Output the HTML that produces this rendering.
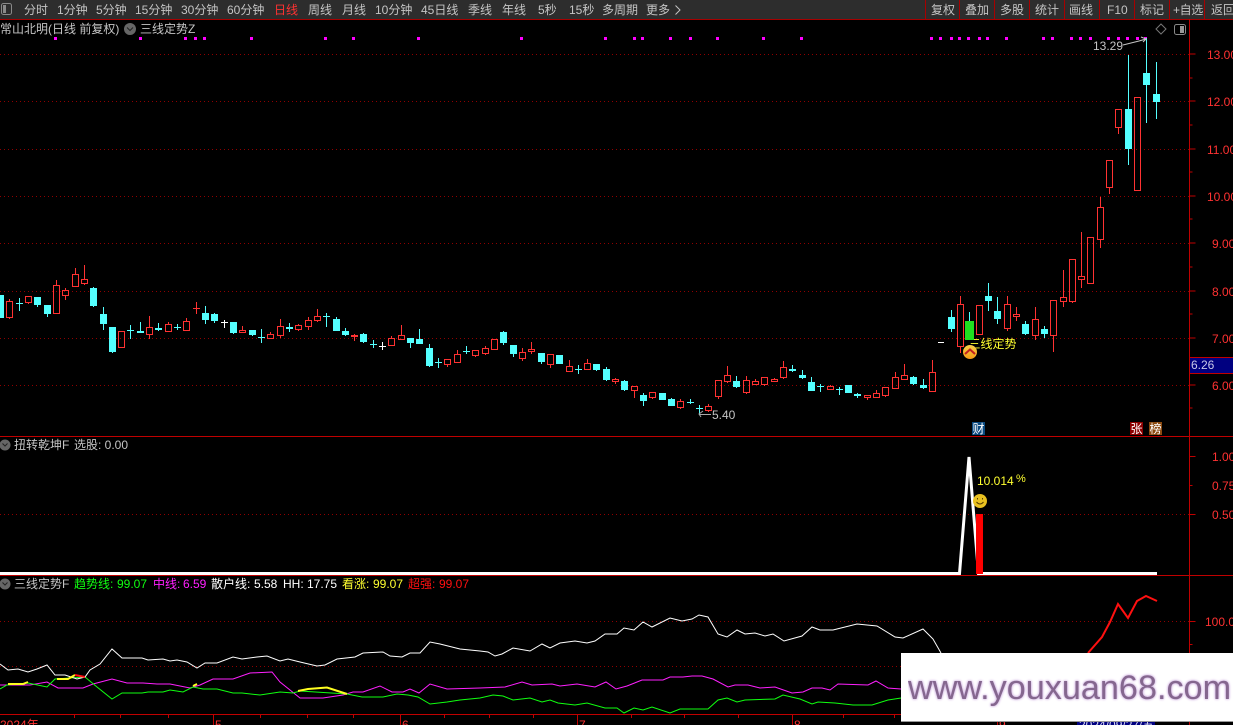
<!DOCTYPE html>
<html lang="zh"><head><meta charset="utf-8"><title>三线定势</title>
<style>
html,body{margin:0;padding:0;background:#000;width:1233px;height:725px;overflow:hidden}
svg{display:block;position:absolute;left:0;top:0}
text{font-family:"Liberation Sans","Noto Sans CJK SC",sans-serif;font-size:12px}
.t text{fill:#c4c4c4}
.a text{fill:#ff3232}
.c{shape-rendering:crispEdges}
.g{stroke:#900000;stroke-width:1;stroke-dasharray:1 3;fill:none}
#wm{position:absolute;left:908px;top:668px;font:34.2px/40px "Liberation Sans",sans-serif;color:#85678f;text-shadow:0 0 2px #c9a6dc,0 0 3px #dcc4ea;white-space:nowrap;width:325px;overflow:hidden}
</style></head><body>
<svg width="1233" height="725" viewBox="0 0 1233 725" xmlns="http://www.w3.org/2000/svg">
<defs><linearGradient id="og" x1="0" y1="0" x2="0" y2="1"><stop offset="0" stop-color="#f9d04a"/><stop offset="1" stop-color="#f59a14"/></linearGradient></defs>
<rect width="1233" height="725" fill="#000"/>
<!-- toolbar -->
<rect width="1233" height="19" fill="#2d2d2d"/>
<g class="c" fill="#a80000"><rect y="19" width="1233" height="1"/><rect x="925" width="1" height="19"/><rect x="959" width="1" height="19"/><rect x="994" width="1" height="19"/><rect x="1029" width="1" height="19"/><rect x="1064" width="1" height="19"/><rect x="1099" width="1" height="19"/><rect x="1134" width="1" height="19"/><rect x="1169" width="1" height="19"/><rect x="1204" width="1" height="19"/></g>
<rect x="1.500" y="3.500" width="10" height="11" rx="2" fill="none" stroke="#8a8a8a"/><rect x="3" y="5" width="3" height="8" fill="#8a8a8a"/>
<g class="t">
<text x="24" y="14">分时</text><text x="57" y="14">1分钟</text><text x="96" y="14">5分钟</text><text x="135" y="14">15分钟</text><text x="181" y="14">30分钟</text><text x="227" y="14">60分钟</text>
<text x="274" y="14" style="fill:#ff3232">日线</text><text x="308" y="14">周线</text><text x="342" y="14">月线</text><text x="375" y="14">10分钟</text><text x="421" y="14">45日线</text><text x="468" y="14">季线</text><text x="502" y="14">年线</text><text x="538" y="14">5秒</text><text x="569" y="14">15秒</text><text x="602" y="14">多周期</text><text x="646" y="14">更多</text>
<text x="931" y="14">复权</text><text x="965" y="14">叠加</text><text x="1000" y="14">多股</text><text x="1035" y="14">统计</text><text x="1069" y="14">画线</text><text x="1107" y="14">F10</text><text x="1140" y="14">标记</text><text x="1173" y="14" style="letter-spacing:-.4px">+自选</text><text x="1211" y="14">返回</text>
<text x="0" y="33">常山北明(日线 前复权)</text><text x="140" y="33">三线定势Z</text>
<text x="14" y="449">扭转乾坤F</text><text x="74" y="449">选股: 0.00</text>
<text x="14" y="588">三线定势F</text>
<text x="1093" y="50">13.29</text><text x="712" y="419">5.40</text>
</g>
<path d="M675.500 5.500l4.500 4.500-4.500 4.500" fill="none" stroke="#c4c4c4"/>
<circle cx="130" cy="29" r="6" fill="#666"/><path d="M127 27.500l3 3 3-3" stroke="#222" fill="none"/>
<path d="M1161 24l5 5-5 5-5-5z" fill="none" stroke="#777"/>
<rect x="1174.500" y="24.500" width="11" height="10" rx="2" fill="none" stroke="#888"/><rect x="1180" y="26" width="4" height="7" fill="#999"/>
<circle cx="5" cy="445" r="5.500" fill="#666"/><path d="M2.500 443.500l2.500 2.500 2.500-2.500" stroke="#222" fill="none"/>
<circle cx="5" cy="584" r="5.500" fill="#666"/><path d="M2.500 582.500l2.500 2.500 2.500-2.500" stroke="#222" fill="none"/>
<!-- dots -->
<path class="c" fill="#ff00ff" d="M54 37h3v3h-3zM139 37h3v3h-3zM184 37h3v3h-3zM194 37h3v3h-3zM203 37h3v3h-3zM250 37h3v3h-3zM324 37h3v3h-3zM352 37h3v3h-3zM417 37h3v3h-3zM520 37h3v3h-3zM604 37h3v3h-3zM633 37h3v3h-3zM641 37h3v3h-3zM669 37h3v3h-3zM689 37h3v3h-3zM716 37h3v3h-3zM762 37h3v3h-3zM800 37h3v3h-3zM930 37h3v3h-3zM939 37h3v3h-3zM950 37h3v3h-3zM958 37h3v3h-3zM967 37h3v3h-3zM978 37h3v3h-3zM986 37h3v3h-3zM1005 37h3v3h-3zM1042 37h3v3h-3zM1051 37h3v3h-3zM1070 37h3v3h-3zM1079 37h3v3h-3zM1089 37h3v3h-3zM1107 37h3v3h-3zM1117 37h3v3h-3zM1126 37h3v3h-3zM1136 37h3v3h-3zM1144 37h3v3h-3z"/>
<!-- grid -->
<path class="g c" d="M0 54.500H1190M0 101.500H1190M0 149.500H1190M0 196.500H1190M0 243.500H1190M0 291.500H1190M0 338.500H1190M0 385.500H1190M0 514.500H1190M0 621.500H1190M0 666.500H1190"/>
<!-- red candles -->
<g class="c" fill="none" stroke="#ff3232">
<path d="M6.500 301.500h6V317.500h-6zM25.500 296.500h6V302.500h-6zM53.500 285.500h6V313.500h-6zM62.500 290.500h6V295.500h-6zM72.500 274.500h6V286.500h-6zM81.500 279.500h6V283.500h-6zM118.500 331.500h6V347.500h-6zM146.500 327.500h6V334.500h-6zM165.500 324.500h6V331.500h-6zM183.500 321.500h6V330.500h-6zM239.500 330.500h6V332.500h-6zM267.500 334.500h6V338.500h-6zM277.500 326.500h6V335.500h-6zM295.500 325.500h6V329.500h-6zM305.500 320.500h6V326.500h-6zM314.500 316.500h6V320.500h-6zM351.500 335.500h6V336.500h-6zM388.500 338.500h6V345.500h-6zM398.500 335.500h6V339.500h-6zM444.500 359.500h6V364.500h-6zM454.500 354.500h6V362.500h-6zM472.500 350.500h6V355.500h-6zM482.500 348.500h6V353.500h-6zM491.500 339.500h6V349.500h-6zM519.500 352.500h6V358.500h-6zM528.500 349.500h6V351.500h-6zM547.500 354.500h6V364.500h-6zM566.500 366.500h6V371.500h-6zM584.500 363.500h6V369.500h-6zM612.500 379.500h6V381.500h-6zM631.500 386.500h6V390.500h-6zM649.500 392.500h6V397.500h-6zM677.500 401.500h6V407.500h-6zM705.500 406.500h6V410.500h-6zM715.500 380.500h6V396.500h-6zM724.500 375.500h6V381.500h-6zM743.500 380.500h6V392.500h-6zM752.500 381.500h6V384.500h-6zM761.500 377.500h6V384.500h-6zM771.500 379.500h6V381.500h-6zM780.500 367.500h6V377.500h-6zM827.500 386.500h6V389.500h-6zM864.500 395.500h6V397.500h-6zM873.500 393.500h6V397.500h-6zM882.500 387.500h6V395.500h-6zM892.500 377.500h6V388.500h-6zM901.500 375.500h6V379.500h-6zM929.500 372.500h6V391.500h-6zM957.500 304.500h6V346.500h-6zM976.500 305.500h6V334.500h-6zM1004.500 304.500h6V328.500h-6zM1013.500 314.500h6V316.500h-6zM1032.500 319.500h6V335.500h-6zM1050.500 300.500h6V335.500h-6zM1060.500 297.500h6V301.500h-6zM1069.500 259.500h6V301.500h-6zM1078.500 276.500h6V279.500h-6zM1087.500 237.500h6V283.500h-6zM1097.500 207.500h6V239.500h-6zM1106.500 160.500h6V187.500h-6zM1115.500 109.500h6V127.500h-6zM1134.500 97.500h6V190.500h-6z"/>
<path d="M9.500 299V301M9.500 318V319M28.500 303V304M56.500 280V285M65.500 288V290M65.500 296V300M75.500 268V274M84.500 265V279M84.500 284V285M149.500 316V327M149.500 335V339M168.500 322V324M186.500 318V321M196.500 302V314M193 308.500h7M242.500 326V330M270.500 332V334M280.500 319V326M280.500 336V338M298.500 324V325M298.500 330V331M308.500 317V320M308.500 327V330M317.500 309V316M317.500 321V322M354.500 334V335M354.500 337V341M391.500 336V338M401.500 325V335M447.500 365V367M457.500 350V354M475.500 356V357M485.500 346V348M485.500 354V355M522.500 348V352M522.500 359V361M531.500 342V349M531.500 352V354M550.500 365V368M569.500 360V366M587.500 359V363M615.500 378V379M615.500 382V384M634.500 391V398M652.500 398V399M680.500 399V401M680.500 408V409M708.500 404V406M708.500 411V412M718.500 397V399M727.500 366V375M727.500 382V383M746.500 376V380M746.500 393V394M755.500 379V381M764.500 385V386M774.500 378V379M783.500 361V367M783.500 378V379M830.500 385V386M867.500 398V400M876.500 390V393M885.500 396V397M895.500 372V377M904.500 364V375M932.500 360V372M960.500 296V304M960.500 347V353M1007.500 296V304M1007.500 329V331M1016.500 307V314M1016.500 317V321M1035.500 307V319M1035.500 336V340M1053.500 336V352M1063.500 270V297M1063.500 302V307M1072.500 302V303M1081.500 232V276M1081.500 280V288M1100.500 197V207M1100.500 240V248M1109.500 188V194M1118.500 128V134"/>
</g>
<!-- cyan wicks/crosses -->
<path class="c" fill="none" stroke="#54ffff" d="M19.500 298V311M16 303.500h7M37.500 305V307M47.500 314V317M93.500 287V288M93.500 306V307M103.500 307V314M103.500 324V330M112.500 352V353M130.500 325V339M127 330.500h7M140.500 322V331M158.500 323V331M177.500 324V330M174 327.500h7M205.500 306V313M205.500 320V324M214.500 313V314M214.500 321V323M233.500 333V334M252.500 335V336M261.500 329V343M258 337.500h7M289.500 323V332M326.500 313V327M323 316.500h7M336.500 317V319M345.500 328V331M345.500 335V336M363.500 333V334M363.500 342V343M373.500 340V348M370 344.500h7M410.500 343V348M419.500 329V339M429.500 344V348M429.500 366V367M438.500 358V368M435 362.500h7M466.500 346V354M463 351.500h7M503.500 331V332M503.500 343V345M513.500 354V357M541.500 362V364M596.500 370V371M578.500 365V374M575 369.500h7M606.500 367V369M606.500 380V381M624.500 380V381M624.500 390V391M643.500 393V395M643.500 401V406M671.500 398V399M690.500 399V404M687 402.500h7M699.500 405V415M696 408.500h7M736.500 376V381M736.500 387V388M792.500 365V372M802.500 370V375M802.500 378V379M811.500 377V382M820.500 384V392M817 386.500h7M839.500 387V395M836 389.500h7M857.500 393V398M913.500 376V377M913.500 384V385M923.500 379V385M923.500 388V389M951.500 310V317M951.500 329V332M969.500 312V321M988.500 283V296M988.500 301V311M997.500 297V311M997.500 319V324M1025.500 321V324M1025.500 334V335M1044.500 326V329M1044.500 334V338M1128.500 55V109M1128.500 149V165M1146.500 38V73M1146.500 85V123M1156.500 62V94M1156.500 102V119"/>
<!-- cyan bodies -->
<path class="c" fill="none" stroke="#54ffff" stroke-width="7" d="M.5 295V318M37.500 297V305M47.500 305V314M93.500 288V306M103.500 314V324M112.500 327V352M140.500 331V333M158.500 328V330M205.500 313V320M214.500 314V321M233.500 322V333M252.500 330V335M289.500 327V329M336.500 319V331M345.500 331V335M363.500 334V342M410.500 338V343M419.500 339V344M429.500 348V366M503.500 332V343M513.500 345V354M541.500 353V362M559.500 355V364M596.500 364V370M606.500 369V380M624.500 381V390M643.500 395V401M662.500 393V400M671.500 399V406M736.500 381V387M792.500 369V371M802.500 375V378M811.500 382V391M848.500 385V393M857.500 394V396M913.500 377V384M923.500 385V388M951.500 317V329M988.500 296V301M997.500 311V319M1025.500 324V334M1044.500 329V334M1128.500 109V149M1146.500 73V85M1156.500 94V102"/>
<!-- white crosses -->
<path class="c" fill="none" stroke="#fff" d="M224.500 320V328M221 322.500h7M382.500 342V350M379 346.500h7M938 342.500h6"/>
<!-- annotations -->
<path d="M1123 45l8-2 8-2 7-2M1141 37l5 2-3 3" fill="none" stroke="#c4c4c4"/>
<path d="M711 414.500H700M703 411l-4 3 2 3" fill="none" stroke="#aaa"/>
<text x="968.500" y="348" fill="#ffff30">三线定势</text>
<path class="c" d="M969.500 321V340" stroke="#1fe01f" stroke-width="9" fill="none"/>
<circle cx="970" cy="352" r="7" fill="url(#og)"/><path d="M965 354l5-4.500 5 4.500" stroke="#c02020" stroke-width="2" fill="none"/>
<!-- badges -->
<rect x="972" y="422" width="13" height="13" fill="#0a4a80"/><text x="972.500" y="433" style="fill:#fff">财</text>
<rect x="1130" y="422" width="13" height="13" fill="#8b0000"/><text x="1130.500" y="433" style="fill:#fff">张</text>
<rect x="1149" y="422" width="13" height="13" fill="#8b4a10"/><text x="1149.500" y="433" style="fill:#fff">榜</text>
<!-- panel 2 -->
<path d="M0 573.500H959.500L969 457L978.500 573.500H1157" fill="none" stroke="#fff" stroke-width="3" stroke-linejoin="miter"/>
<rect class="c" x="976" y="514" width="7" height="60" fill="#ff0000"/>
<text x="977" y="485" fill="#ffff30">10.014</text><text x="1016" y="482" fill="#ffff30" style="font-size:11px">%</text>
<circle cx="980" cy="501" r="7" fill="#e8c020"/><path d="M976.500 502q3.500 4 7 0" stroke="#5a4000" fill="none"/><path d="M977.500 498v1.500M982.500 498v1.500" stroke="#5a4000"/>
<!-- panel 3 header -->
<text x="74" y="588" fill="#10ff10">趋势线:</text><text x="117" y="588" fill="#10ff10">99.07</text>
<text x="153" y="588" fill="#ff20ff">中线:</text><text x="183" y="588" fill="#ff20ff">6.59</text>
<text x="211" y="588" fill="#fff">散户线:</text><text x="254" y="588" fill="#fff">5.58</text>
<text x="283" y="588" fill="#fff">HH: 17.75</text>
<text x="342" y="588" fill="#ffff30">看涨:</text><text x="373" y="588" fill="#ffff30">99.07</text>
<text x="408" y="588" fill="#ff1010">超强:</text><text x="439" y="588" fill="#ff1010">99.07</text>
<!-- panel 3 lines -->
<polyline fill="none" stroke="#ff20ff" points="0,685 30,685 47,682 58,688 83,688 93,684 112,679 127,683 143,683 157,684 170,684 190,688 200,685 213,679 233,679 250,673 272,672 280,682 300,698 323,698 343,695 353,692 363,692 380,686 392,692 403,692 410,689 419,693 430,684 447,689 480,688 505,687 522,682 532,685 552,684 560,686 577,684 595,687 606,682 616,689 627,686 642,680 663,680 670,677 683,677 692,676 702,676 713,679 728,687 735,685 748,685 760,688 775,687 792,693 803,692 812,688 822,688 830,690 838,684 868,685 876,681 888,688 901,689"/>
<polyline fill="none" stroke="#10ff10" points="0,689 7,685 28,683 47,687 55,679 85,677 97,687 112,699 122,693 142,693 148,692 163,692 170,690 183,692 193,687 203,689 217,689 233,693 242,693 260,695 280,692 293,693 300,691 347,694 362,697 383,697 397,694 408,695 418,697 430,704 447,702 460,700 480,698 493,695 503,696 513,700 530,698 542,702 550,700 558,703 575,705 587,703 605,708 617,708 624,713 634,708 643,710 652,707 670,713 680,709 708,709 718,700 727,698 737,702 745,700 775,699 783,695 800,699 812,704 818,702 835,703 853,705 872,705 888,700 901,698"/>
<polyline fill="none" stroke="#fff" points="0,664 8,670 18,669 28,672 37,669 47,665 55,675 65,675 77,679 85,677 90,670 100,664 112,649 122,658 142,658 148,660 163,659 170,661 177,660 187,662 197,668 205,663 217,663 233,657 242,659 257,657 267,656 280,661 288,659 300,662 317,666 325,665 337,659 355,657 363,653 383,652 390,656 402,657 410,653 420,653 430,642 440,644 460,649 480,651 488,652 495,656 502,654 513,648 530,651 542,644 550,648 560,643 575,641 587,643 595,641 605,634 617,634 624,628 634,630 643,622 652,627 670,618 682,621 692,619 699,615 708,617 718,634 727,637 737,630 745,634 755,633 765,636 773,634 784,641 802,636 812,627 820,630 833,630 857,624 877,626 895,637 903,638 923,629 933,639 941,653"/>
<g fill="none" stroke="#ffff20" stroke-width="2">
<polyline points="8,684 23,684 28,682"/><polyline points="57,679 68,679 75,675"/><polyline points="193,686 197,684"/><polyline points="298,691 308,689 327,687.500 347,694"/>
</g>
<polyline points="75,675 85,677" fill="none" stroke="#ff1010" stroke-width="2"/>
<polyline points="1088,653 1102,637 1110,622 1118,604 1128,618 1137,601 1146,596 1157,601" fill="none" stroke="#ff1010" stroke-width="2"/>
<!-- frames -->
<path class="c" fill="none" stroke="#c00000" d="M0 436.500H1233M0 575.500H1233M0 714.500H1190M1189.500 19V725M1189.500 54h6M1189.500 78h3M1189.500 101h6M1189.500 125h3M1189.500 149h6M1189.500 172h3M1189.500 196h6M1189.500 219h3M1189.500 243h6M1189.500 267h3M1189.500 291h6M1189.500 314h3M1189.500 338h6M1189.500 361h3M1189.500 385h6M1189.500 408h3M1189.500 456.500h6M1189.500 485.500h3M1189.500 514.500h6M1189.500 621.500h6M1189.500 644.500h3M74.500 714V718M120.500 714V718M168.500 714V718M260.500 714V718M307.500 714V718M353.500 714V718M444.500 714V718M489.500 714V718M533.500 714V718M631.500 714V718M684.500 714V718M738.500 714V718M843.500 714V718M894.500 714V718M213.500 714V725M400.500 714V725M577.500 714V725M792.500 714V725M997.500 714V725"/>
<g class="a">
<text x="1207" y="59">13.00</text><text x="1207" y="106">12.00</text><text x="1207" y="154">11.00</text><text x="1207" y="201">10.00</text><text x="1212" y="248">9.00</text><text x="1212" y="296">8.00</text><text x="1212" y="343">7.00</text><text x="1212" y="390">6.00</text>
<text x="1212" y="461">1.00</text><text x="1212" y="490">0.75</text><text x="1212" y="519">0.50</text><text x="1205" y="626">100.0</text>
<text x="0" y="729">2024年</text><text x="215" y="729">5</text><text x="402" y="729">6</text><text x="579" y="729">7</text><text x="794" y="729">8</text><text x="999" y="729">9</text>
</g>
<rect class="c" x="1190" y="357" width="43" height="16" fill="#000080"/><rect class="c" x="1189" y="357" width="44" height="1" fill="#c00000"/><rect class="c" x="1189" y="373" width="44" height="1" fill="#c00000"/>
<text x="1191" y="369" fill="#c8c8e8">6.26</text>
<rect class="c" x="1077" y="718" width="78" height="7" fill="#000080"/>
<text x="1079" y="729" fill="#d8d8f0">2024/09/27/五</text>
<!-- watermark box -->
<rect class="c" x="901" y="653" width="332" height="68" fill="#fff"/>
<rect class="c" x="901" y="721" width="332" height="1" fill="#999"/>
</svg>
<div id="wm">www.youxuan68.com</div>
</body></html>
